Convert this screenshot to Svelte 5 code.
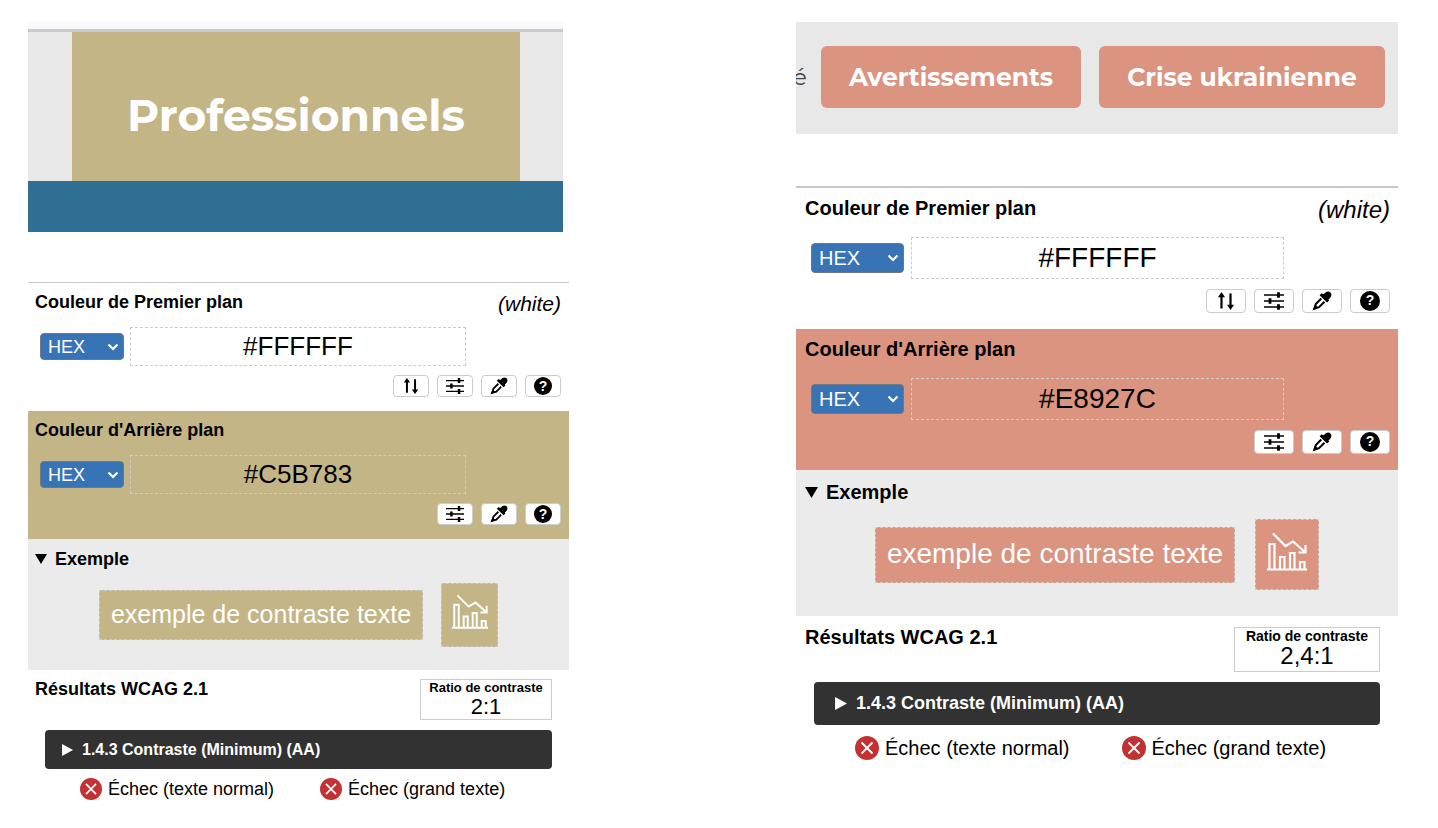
<script>
  const audits = [
    { id: 'gold', size: 'compact', color: '#c3b586', hex: '#C5B783', ratio: '2:1' },
    { id: 'coral', size: 'roomy', color: '#da947f', hex: '#E8927C', ratio: '2,4:1' }
  ];
  const outcomes = ['Échec (texte normal)', 'Échec (grand texte)'];
</script>

{#snippet swapIcon()}
  <svg class="glyph" viewBox="0 0 20 20" aria-hidden="true">
    <path d="M5.500 17.500V4M14.500 2.500v13" fill="none" stroke="#000" stroke-width="2.200" />
    <path d="M2 6.200 5.500 1 9 6.200zM11 13.800 14.500 19l3.500-5.200z" />
  </svg>
{/snippet}

{#snippet slidersIcon()}
  <svg class="glyph" viewBox="0 0 20 20" aria-hidden="true">
    <path d="M0 4h20M0 10h20M0 16h20" fill="none" stroke="#000" stroke-width="1.500" />
    <path d="M14.500 1.200v5.600M6 7.200v5.600M14.500 13.200v5.600" fill="none" stroke="#000" stroke-width="2.800" />
  </svg>
{/snippet}

{#snippet dropperIcon()}
  <svg class="glyph" viewBox="0 0 20 20" aria-hidden="true">
    <path d="M12 3c1.800-2.500 4.600-3.200 6.400-1.600 1.800 1.700 1.100 4.600-1.400 6.500l-.5.600.6.900-2 2-7.500-7.200 2-2 1.100.9z" />
    <path d="M9.300 7.500 3.800 13 2.500 17.500 7 16.200 12.500 10.700" fill="none" stroke="#000" stroke-width="2" />
    <path d="M3 13.500 .5 19.500 6.500 17z" />
  </svg>
{/snippet}

{#snippet picker(audit, kind, title, value)}
  <section class="picker {kind}" style:background-color={kind === 'back' ? audit.color : null}>
    <div class="head">
      <label for="{audit.id}-{kind}">{title}</label>
      {#if kind === 'front'}<em>(white)</em>{/if}
    </div>
    <div class="field">
      <div class="format">
        <select aria-label="Format"><option>HEX</option></select>
        <svg viewBox="0 0 12 8" aria-hidden="true"><path d="M1.500 1.500 6 6l4.500-4.500" fill="none" stroke="#fff" stroke-width="2.200" /></svg>
      </div>
      <input id="{audit.id}-{kind}" type="text" {value} />
    </div>
    <div class="tools">
      {#if kind === 'front'}
        <button type="button" aria-label="Inverser">{@render swapIcon()}</button>
      {/if}
      <button type="button" aria-label="Curseurs">{@render slidersIcon()}</button>
      <button type="button" aria-label="Pipette">{@render dropperIcon()}</button>
      <button type="button" aria-label="Aide"><span class="help">?</span></button>
    </div>
  </section>
{/snippet}

<main>
  {#each audits as audit}
    <article class={audit.size}>
      {#if audit.id === 'gold'}
        <header class="tab-banner">
          <div class="strip"></div>
          <div class="tab-row"><a href="#pro" style:background-color={audit.color}>Professionnels</a></div>
          <div class="blue"></div>
        </header>
      {:else}
        <header class="nav-banner">
          <span class="cut">é</span>
          <a href="#avertissements" style:background-color={audit.color}>Avertissements</a>
          <a class="wide" href="#crise" style:background-color={audit.color}>Crise ukrainienne</a>
        </header>
      {/if}

      {@render picker(audit, 'front', 'Couleur de Premier plan', '#FFFFFF')}
      {@render picker(audit, 'back', "Couleur d'Arrière plan", audit.hex)}

      <details class="example" open>
        <summary>
          <svg viewBox="0 0 12 12" aria-hidden="true"><path d="M0 1h12L6 11z" /></svg>
          Exemple
        </summary>
        <div class="samples">
          <span class="sample-text" style:background-color={audit.color}>exemple de contraste texte</span>
          <span class="sample-icon" style:background-color={audit.color}>
            <svg viewBox="0 0 40 40" fill="none" stroke="#fff" stroke-width="2.200" aria-hidden="true">
              <path d="M0 37.500h40M2.500 37V12h5v25M13 37V25h4.500v12M23 37V21h4.500v16M33 37v-7h4.500v7" />
              <path d="M6 1.500 18.500 14 26 9.500 38 20M38.500 13v7.500H31.500" />
            </svg>
          </span>
        </div>
      </details>

      <section class="results">
        <div class="summary-row">
          <h2>Résultats WCAG 2.1</h2>
          <div class="ratio"><b>Ratio de contraste</b><span>{audit.ratio}</span></div>
        </div>
        <details class="criterion">
          <summary>
            <svg viewBox="0 0 12 12" aria-hidden="true"><path d="M1 0l11 6-11 6z" fill="#fff" /></svg>
            1.4.3 Contraste (Minimum) (AA)
          </summary>
        </details>
        <ul>
          {#each outcomes as outcome}
            <li>
              <svg viewBox="0 0 24 24" aria-hidden="true">
                <circle cx="12" cy="12" r="12" fill="#c23232" />
                <path d="M6.500 6.500l11 11M17.500 6.500l-11 11" stroke="#fff" stroke-width="1.800" />
              </svg>
              {outcome}
            </li>
          {/each}
        </ul>
      </section>
    </article>
  {/each}
</main>

<style>
  :global(body) {
    margin: 0;
    background: #fff;
  }

  main {
    display: grid;
    grid-template-columns: minmax(0, 541fr) minmax(0, 602fr);
    gap: 227px;
    align-items: start;
    padding: 22px 40px 16px 28px;
    font-family: 'Liberation Sans', Arial, sans-serif;
    color: #000;
  }

  main * {
    box-sizing: border-box;
  }

  .compact {
    --text: 18px;
    --hex: 26px;
    --name: 21px;
    --sample: 25px;
    --bar-text: 16px;
    --caption: 13px;
    --ratio: 22px;
    --ratio-line: 22px;
    --pad: 7px;
    --head: 44px;
    --head-top: 7px;
    --field-left: 12px;
    --field-right: 103px;
    --field-gap: 6px;
    --field-h: 39px;
    --select-w: 84px;
    --select-h: 27px;
    --tools-top: 9px;
    --tools-bottom: 14px;
    --tool-w: 36px;
    --tool-h: 22px;
    --glyph: 18px;
    --ex-head: 44px;
    --ex-bottom: 23px;
    --ex-gap: 18px;
    --text-h: 50px;
    --icon-w: 57px;
    --icon-h: 64px;
    --chart: 36px;
    --res-top: 9px;
    --ratio-w: 132px;
    --ratio-h: 41px;
    --inset: 17px;
    --bar-h: 39px;
    --bar-bottom: 6px;
    --bar-pad: 16px;
    --badge: 22px;
    --list-left: 52px;
    --list-gap: 46px;
    --marker: 12px;
  }

  .roomy {
    --text: 20px;
    --hex: 28px;
    --name: 24px;
    --sample: 28px;
    --bar-text: 18px;
    --caption: 14px;
    --ratio: 24px;
    --ratio-line: 24px;
    --pad: 9px;
    --head: 49px;
    --head-top: 8px;
    --field-left: 15px;
    --field-right: 114px;
    --field-gap: 7px;
    --field-h: 42px;
    --select-w: 93px;
    --select-h: 30px;
    --tools-top: 10px;
    --tools-bottom: 16px;
    --tool-w: 40px;
    --tool-h: 24px;
    --glyph: 20px;
    --ex-head: 49px;
    --ex-bottom: 26px;
    --ex-gap: 20px;
    --text-h: 56px;
    --icon-w: 64px;
    --icon-h: 71px;
    --chart: 40px;
    --res-top: 11px;
    --ratio-w: 146px;
    --ratio-h: 45px;
    --inset: 18px;
    --bar-h: 43px;
    --bar-bottom: 9px;
    --bar-pad: 20px;
    --badge: 24px;
    --list-left: 59px;
    --list-gap: 52px;
    --marker: 13px;
  }

  header {
    font-family: Montserrat, Inter, sans-serif;
  }

  header a {
    color: #fff;
    text-decoration: none;
    font-weight: 700;
    display: flex;
    align-items: center;
    justify-content: center;
    white-space: nowrap;
  }

  .tab-banner {
    margin: 0 6px 50px 0;
    background: #e8e8e8;
  }

  .strip {
    height: 10px;
    background: #f9f9fb;
    border-bottom: 3px solid #c9c9cc;
  }

  .tab-row {
    padding: 0 43px 0 44px;
  }

  .tab-row a {
    height: 149px;
    padding-top: 16px;
    font-size: 44px;
  }

  .blue {
    height: 51px;
    background: #2f6f94;
  }

  .nav-banner {
    display: flex;
    align-items: center;
    gap: 18px;
    height: 112px;
    margin-bottom: 52px;
    padding: 0 13px 2px 0;
    background: #e8e8e8;
    overflow: hidden;
  }

  .nav-banner a {
    flex: 260 1 0;
    height: 62px;
    border-radius: 6px;
    font-size: 25px;
  }

  .nav-banner a.wide {
    flex-grow: 286;
  }

  .cut {
    width: 11px;
    margin-right: -4px;
    display: flex;
    justify-content: flex-end;
    color: #444;
    font-size: 23px;
  }

  .picker {
    padding-bottom: var(--tools-bottom);
  }

  .picker.front {
    border-top: 1px solid #c8c8c8;
  }

  .roomy .picker.front {
    border-top-width: 2px;
  }

  .head {
    display: flex;
    justify-content: space-between;
    height: var(--head);
    padding: var(--head-top) 8px 0 var(--pad);
    line-height: 24px;
  }

  .head label {
    font-size: var(--text);
    font-weight: 700;
  }

  .head em {
    font-size: var(--name);
    line-height: 28px;
  }

  .field {
    display: flex;
    align-items: center;
    gap: var(--field-gap);
    padding: 0 var(--field-right) 0 var(--field-left);
  }

  .format {
    position: relative;
    flex: none;
    width: var(--select-w);
    height: var(--select-h);
  }

  .format svg {
    position: absolute;
    right: 5px;
    top: 50%;
    width: 12px;
    height: 8px;
    margin-top: -4px;
    pointer-events: none;
  }

  select {
    appearance: none;
    width: 100%;
    height: 100%;
    padding: 0 7px;
    border: 1px solid #70787f;
    border-radius: 4px;
    background: #3873b5;
    color: #fff;
    font: var(--text) 'Liberation Sans', Arial, sans-serif;
  }

  input {
    flex: 1;
    min-width: 0;
    height: var(--field-h);
    padding: 0;
    border: 1px dashed #ccc;
    background: transparent;
    color: #000;
    text-align: center;
    font: var(--hex) 'Liberation Sans', Arial, sans-serif;
  }

  .tools {
    display: flex;
    justify-content: flex-end;
    gap: 8px;
    padding: var(--tools-top) 8px 0 0;
  }

  .tools button {
    display: flex;
    align-items: center;
    justify-content: center;
    width: var(--tool-w);
    height: var(--tool-h);
    padding: 0;
    border: 1px solid #ccc;
    border-radius: 4px;
    background: #fff;
  }

  .glyph {
    width: var(--glyph);
    height: var(--glyph);
  }

  .help {
    width: var(--glyph);
    height: var(--glyph);
    border-radius: 50%;
    background: #000;
    color: #fff;
    font: 700 14px/19px 'Liberation Sans', Arial, sans-serif;
  }

  summary {
    display: flex;
    align-items: center;
    list-style: none;
    font-weight: 700;
  }

  summary svg {
    width: var(--marker);
    height: var(--marker);
  }

  .example {
    padding-bottom: var(--ex-bottom);
    background: #ebebeb;
  }

  .example summary {
    gap: 8px;
    height: var(--ex-head);
    padding: 0 var(--pad) 4px;
    font-size: var(--text);
  }

  .samples {
    display: flex;
    align-items: center;
    justify-content: center;
    gap: var(--ex-gap);
  }

  .samples span {
    border: 1px dashed #ccc;
    display: flex;
    align-items: center;
    justify-content: center;
  }

  .sample-text {
    height: var(--text-h);
    padding: 0 11px 2px;
    color: #fff;
    font-size: var(--sample);
    white-space: nowrap;
  }

  .sample-icon {
    width: var(--icon-w);
    height: var(--icon-h);
    padding-bottom: 6px;
  }

  .sample-icon svg {
    width: var(--chart);
    height: var(--chart);
  }

  .results {
    padding: var(--res-top) var(--inset) 0;
  }

  .summary-row {
    display: flex;
    justify-content: space-between;
    margin-left: calc(var(--pad) - var(--inset));
  }

  h2 {
    margin: 0;
    font-size: var(--text);
    line-height: 20px;
  }

  .ratio {
    display: flex;
    flex-direction: column;
    align-items: center;
    width: var(--ratio-w);
    height: var(--ratio-h);
    border: 1px solid #ccc;
    white-space: nowrap;
  }

  .ratio b {
    font-size: var(--caption);
    line-height: 16px;
  }

  .ratio span {
    font-size: var(--ratio);
    line-height: var(--ratio-line);
  }

  .criterion {
    margin: 10px 0 var(--bar-bottom);
  }

  .criterion summary {
    gap: 9px;
    height: var(--bar-h);
    padding: 0 var(--bar-pad);
    border-radius: 4px;
    background: #323232;
    color: #fff;
    font-size: var(--bar-text);
  }

  ul {
    display: flex;
    gap: var(--list-gap);
    margin: 0;
    padding: 0 0 0 calc(var(--list-left) - var(--inset));
    list-style: none;
  }

  li {
    display: flex;
    align-items: center;
    gap: 6px;
    height: 28px;
    font-size: var(--text);
    white-space: nowrap;
  }

  li svg {
    width: var(--badge);
    height: var(--badge);
  }
</style>
